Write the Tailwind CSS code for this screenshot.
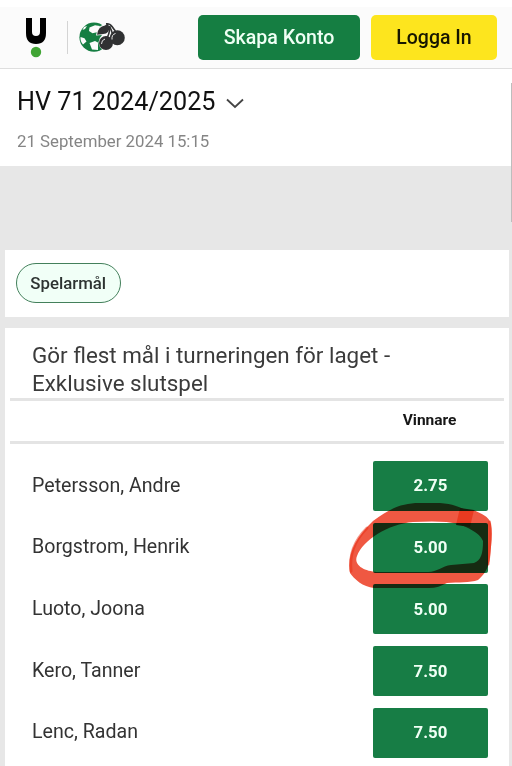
<!DOCTYPE html>
<html lang="sv">
<head>
<meta charset="utf-8">
<title>HV 71 2024/2025</title>
<script src="https://cdn.jsdelivr.net/npm/@tailwindcss/browser@4"></script>
</head>
<body class="relative h-[766px] w-[512px] overflow-hidden bg-[#e7e7e7] font-['Roboto',sans-serif] text-[#333]">
<header class="flex h-[69px] items-start border-b border-[#dedede] bg-[#fbfbfb] border-t-[7px] border-t-white">
  <svg class="ml-[25px] mt-[10px]" width="22" height="41" viewBox="0 0 22 41">
    <path d="M1 1h6v14q0 4 4 4t4-4V1h6v15q0 11-10 11T1 16Z" fill="#000"/>
    <circle cx="11" cy="35" r="5.2" fill="#41a535"/>
  </svg>
  <div class="ml-5 mt-[14px] h-[33px] w-px bg-[#d4d4d4]"></div>
  <svg class="ml-[10px] mt-[14px]" width="49" height="33" viewBox="78 21 49 33">
    <circle cx="94" cy="37.2" r="14.6" fill="#157e42"/>
    <path d="M89.500 27.500L95 25.300 100 26 98 32 92.500 33.300 89 31ZM80.500 37L84.500 38.200 86.500 41.500 83 44.500Q80 41 80.500 37ZM89.500 43L95 41 98 42.500 98 50 92 49.500ZM84 27L87 26 85 29 82.500 30Z" fill="#fbfbfb"/>
    <path d="M96 35.500Q97 26 104 24.500L108 22Q113 22 115 29.500 125 29.500 126 38 125 46.500 114 45.500 112 51 106 50.800 98.500 49 98.500 42 99 38 102 35Z" fill="#fbfbfb"/>
    <path d="M97 34.800Q98 26.500 105 25.500L108 23Q111 31 106 33.500Q102 34.500 97 34.800Z" fill="#303132"/>
    <circle cx="106" cy="43" r="7" fill="#303132"/>
    <circle cx="117.3" cy="37.800" r="7.500" fill="#303132"/>
    <path d="M106 23.800Q110 23.500 112 26.500T115.500 31M109 26Q110.500 31 107.500 37M109.500 26Q111.500 30 112.500 34" fill="none" stroke="#303132" stroke-width="1.6"/>
    <path d="M101.500 44Q101.500 40 105 39M112 39.500Q111.500 34.500 115.500 33.500" fill="none" stroke="#fbfbfb" stroke-width="0.9"/>
  </svg>
  <div class="ml-[71px] mt-2 flex h-[45px] w-[162px] items-center justify-center rounded-[5px] bg-[#157e42] text-[19.6px] font-medium text-[#effff4]">Skapa Konto</div>
  <div class="ml-[11px] mt-2 flex h-[45px] w-[126px] items-center justify-center rounded-[5px] bg-[#fde51e] text-[19.5px] font-medium text-[#171700]">Logga In</div>
</header>
<section class="h-[97px] bg-white pl-[17px] pt-[17px]">
  <div class="flex h-8 items-center">
    <h1 class="whitespace-nowrap text-[25.2px] leading-8 text-[#111]">HV 71 2024/2025</h1>
    <svg class="ml-[11px] mt-[2px]" width="18" height="11" viewBox="0 0 18 11"><path d="M1 1.5l8 7.5 8-7.5" fill="none" stroke="#444" stroke-width="1.8"/></svg>
  </div>
  <p class="mt-[11px] text-[16.8px] leading-6 text-[#858585]">21 September 2024 15:15</p>
</section>
<section class="ml-[5px] mt-[84px] h-[67px] w-[504px] bg-white pl-[11px] pt-[13px]">
  <div class="flex h-10 w-[104.5px] items-center justify-center rounded-full border-[1.5px] border-[#43805b] bg-[#f1fff7] pt-px text-[16.8px] font-medium text-[#2d3331]">Spelarmål</div>
</section>
<main class="ml-[5px] mt-[11px] h-[438px] w-[504px] bg-white px-[5px] pt-[13px]">
  <h2 class="h-[57px] pl-[22px] text-[22.4px] leading-7 text-[#3b3b3b]">Gör flest mål i turneringen för laget -<br>Exklusive slutspel</h2>
  <div class="flex h-[46px] items-center justify-end border-y-[3px] border-[#e4e4e4] pr-[47.5px] text-[15.5px] font-bold text-[#171717]">Vinnare</div>
  <ul class="mt-[17px] flex flex-col gap-[11.7px] pl-[22px] pr-[16px] text-[19.6px] leading-6">
    <li class="flex h-[50px] items-center justify-between"><span class="pb-px">Petersson, Andre</span><b class="flex h-[50px] w-[115px] items-center justify-center rounded-[2px] bg-[#177d45] pb-0.5 text-[16.8px] text-[#f0fff5]">2.75</b></li>
    <li class="flex h-[50px] items-center justify-between"><span class="pb-px">Borgstrom, Henrik</span><b class="flex h-[50px] w-[115px] items-center justify-center rounded-[2px] bg-[#177d45] pb-px text-[16.8px] text-[#f0fff5]">5.00</b></li>
    <li class="flex h-[50px] items-center justify-between"><span class="pb-px">Luoto, Joona</span><b class="flex h-[50px] w-[115px] items-center justify-center rounded-[2px] bg-[#177d45] pb-px text-[16.8px] text-[#f0fff5]">5.00</b></li>
    <li class="flex h-[50px] items-center justify-between"><span class="pb-px">Kero, Tanner</span><b class="flex h-[50px] w-[115px] items-center justify-center rounded-[2px] bg-[#177d45] pb-px text-[16.8px] text-[#f0fff5]">7.50</b></li>
    <li class="flex h-[50px] items-center justify-between"><span class="pb-px">Lenc, Radan</span><b class="flex h-[50px] w-[115px] items-center justify-center rounded-[2px] bg-[#177d45] pb-px text-[16.8px] text-[#f0fff5]">7.50</b></li>
  </ul>
</main>
<div class="absolute right-0 top-[83px] h-[139px] w-px bg-[#bdbdbd]"></div>
<svg class="absolute left-[340px] top-[490px] mix-blend-multiply" width="172" height="110" viewBox="340 490 172 110">
  <path fill-rule="evenodd" fill="#ef5842" d="M350 573C347 556 354 539 373 521C390 508 403 503 419 503H440C453 504 459 507 466 510L474 510C481 514 489 516 491 524C493 534 491 546 490 557C489 568 484 575 478 580C470 583 458 582 447 583C441 586 436 588 429 588H374C363 587 354 579 350 573ZM357 556C353 566 366 572 379 572H428C437 572 442 566 451 565L474 563C481 560 483 554 483 541C479 532 468 528 459 524C447 521 431 521 413 522C388 524 363 540 357 556Z"/>
  <path d="M351 571Q348 547 367 528M489.500 522Q491 538 488 564" fill="none" stroke="#e92c12" stroke-opacity=".5" stroke-width="3" stroke-linecap="round"/>
  <path d="M460 508L474 510 470 527 456 525Z" fill="#e93a20"/>
</svg>
</body>
</html>
